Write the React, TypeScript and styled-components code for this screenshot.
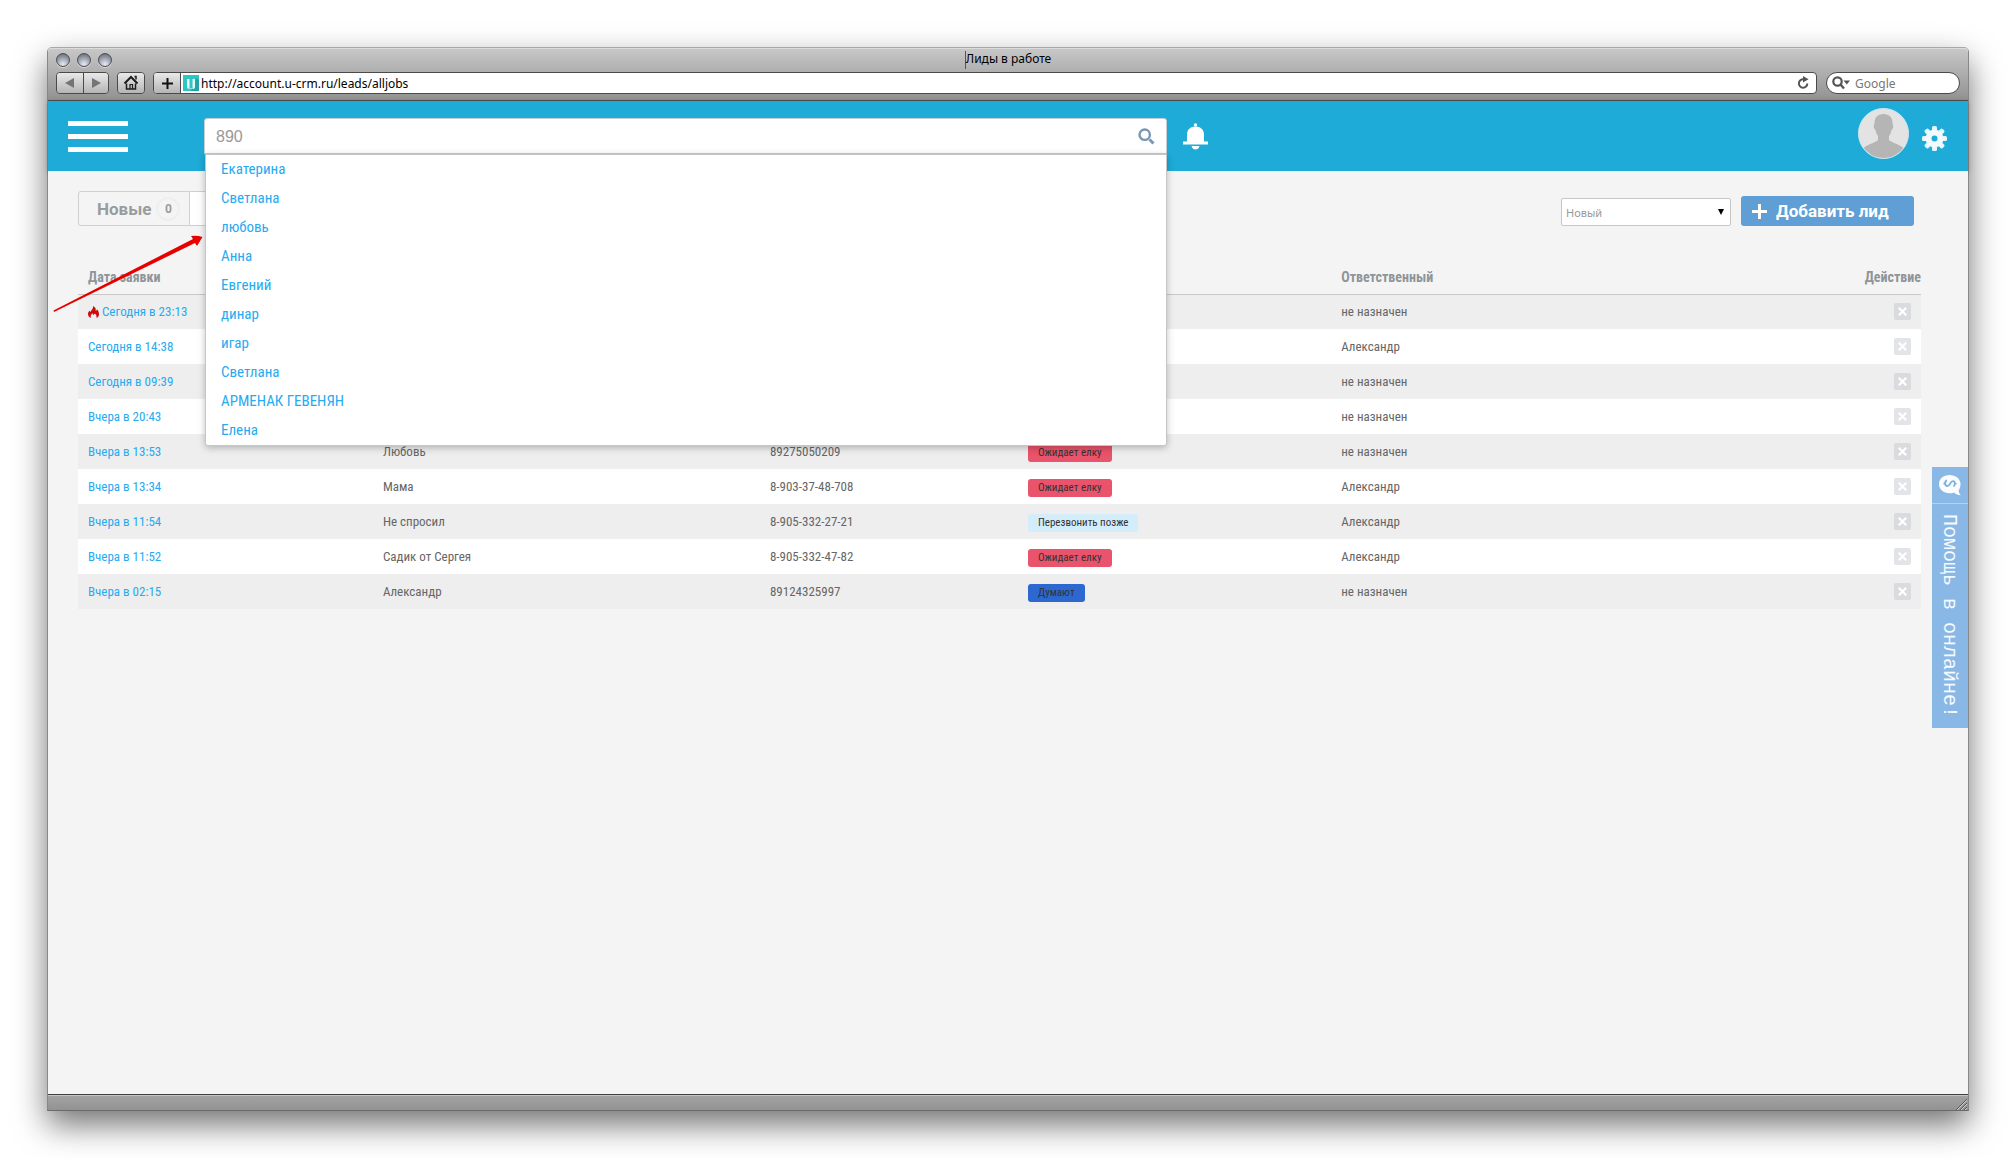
import React, { useState } from 'react';
import styled, { createGlobalStyle } from 'styled-components';

const condensed = `"Roboto Condensed", Roboto, "Noto Sans", sans-serif`;
const sans = `Roboto, "Noto Sans", sans-serif`;
const chromeFont = `"Noto Sans", "Open Sans", sans-serif`;

const GlobalStyle = createGlobalStyle`
  *, *::before, *::after { box-sizing: border-box; }
  body { margin: 0; background: #fff; font-family: ${sans}; }
  button, input, select { font: inherit; margin: 0; }
  button { cursor: pointer; padding: 0; }
  svg { display: block; }
`;

const Desktop = styled.div`
  min-height: 100vh;
  padding: 47px;
  display: flex;
  position: relative;
`;

const Window = styled.div`
  flex: 1;
  min-width: 0;
  display: flex;
  flex-direction: column;
  border: 1px solid #878787;
  border-top-color: #a8a8a8;
  border-bottom-color: #6b6b6b;
  border-radius: 5px 5px 0 0;
  box-shadow: 0 14px 32px rgba(0, 0, 0, 0.55);
`;

const Chrome = styled.div`
  height: 53px;
  border-radius: 4px 4px 0 0;
  border-bottom: 1px solid #4f4f4f;
  background: linear-gradient(#c8c8c8, #929292);
  box-shadow: inset 0 1px 0 #dcdcdc;
`;

const TitleBar = styled.div`
  display: grid;
  grid-template-columns: 1fr auto 1fr;
  align-items: center;
  height: 24px;
  padding: 0 8px;
`;

const Lights = styled.div`
  display: flex;
  gap: 7px;
`;

const Light = styled.button`
  width: 14px;
  height: 14px;
  border: 1px solid #4d5058;
  border-radius: 50%;
  background: radial-gradient(circle at 50% 85%, #e8ebf2 0, #a6acb8 45%, #5b606b 100%);
  box-shadow: 0 1px 0 #d8d8d8;
`;

const Title = styled.div`
  padding-bottom: 2px;
  border-left: 1px solid #555;
  font-family: ${chromeFont};
  font-size: 12px;
  line-height: 16px;
  color: #000;
`;

const NavBar = styled.div`
  display: flex;
  height: 22px;
  padding: 0 8px;
`;

const NavGroup = styled.div`
  display: flex;
  margin-right: 8px;
  border: 1px solid #4a4a4a;
  border-radius: 4px;
  overflow: hidden;
`;

const NavButton = styled.button`
  width: 26px;
  display: grid;
  place-items: center;
  border: 0;
  background: linear-gradient(#e9e9e9, #b5b5b5);
  & + & { width: 25px; border-left: 1px solid #4a4a4a; }
`;

const Address = styled.form`
  flex: 1;
  display: flex;
  align-items: center;
  border: 1px solid #4a4a4a;
  border-radius: 4px;
  background: #fff;
  overflow: hidden;
`;

const PlusButton = styled(NavButton)`
  width: 27px;
  height: 20px;
  margin-right: 2px;
  border-right: 1px solid #4a4a4a;
`;

const ChromeInput = styled.input<{ $muted?: boolean }>`
  flex: 1;
  min-width: 0;
  height: 20px;
  padding: 0 2px;
  border: 0;
  outline: 0;
  background: transparent;
  font-family: ${chromeFont};
  font-size: 12px;
  color: ${(p) => (p.$muted ? '#777' : '#000')};
  &::placeholder { color: #777; opacity: 1; }
`;

const ReloadButton = styled.button`
  margin-right: 6px;
  border: 0;
  background: none;
`;

const WebSearch = styled.label`
  width: 134px;
  margin-left: 9px;
  padding: 0 5px;
  display: flex;
  align-items: center;
  gap: 3px;
  border: 1px solid #4a4a4a;
  border-radius: 11px;
  background: #fff;
`;

const Header = styled.header`
  height: 70px;
  padding: 0 21px 0 20px;
  display: flex;
  align-items: center;
  background: #1eabd8;
  box-shadow: 0 1px 5px rgba(0, 0, 0, 0.25);
`;

const MenuButton = styled.button`
  width: 60px;
  margin-right: 76px;
  display: flex;
  flex-direction: column;
  gap: 8px;
  border: 0;
  background: none;
`;

const MenuLine = styled.span`
  display: block;
  width: 100%;
  height: 5px;
  background: #fff;
`;

const SearchArea = styled.div`
  position: relative;
  width: 963px;
  max-width: 52%;
`;

const SearchBox = styled.form`
  height: 36px;
  padding: 0 11px;
  display: flex;
  align-items: center;
  border: 1px solid #c4cdd0;
  border-radius: 3px 3px 0 0;
  background: #fff;
`;

const SearchInput = styled.input`
  flex: 1;
  min-width: 0;
  padding: 2px 0 0;
  border: 0;
  outline: 0;
  font-family: "Liberation Sans", Arial, sans-serif;
  font-size: 16px;
  color: #999;
`;

const IconButton = styled.button`
  border: 0;
  background: none;
  color: inherit;
`;

const Suggestions = styled.ul`
  position: absolute;
  z-index: 2;
  top: 100%;
  left: 1px;
  right: 0;
  margin: 0;
  padding: 0;
  list-style: none;
  border: 1px solid #c6c6c6;
  border-radius: 0 0 3px 3px;
  background: #fff;
  box-shadow: 0 2px 7px rgba(0, 0, 0, 0.25);
`;

const Suggestion = styled.a`
  display: block;
  padding: 0 15px;
  font-family: ${condensed};
  font-size: 15px;
  line-height: 29px;
  color: #27aaf0;
  text-decoration: none;
`;

const BellButton = styled(IconButton)`
  margin: 0 auto 0 16px;
`;

const SettingsButton = styled(IconButton)`
  margin-top: 4px;
`;

const Avatar = styled.button`
  width: 51px;
  height: 51px;
  margin: 0 13px 6px 0;
  border: 1px solid #d6e6ec;
  border-radius: 50%;
  background: #e3e3e3;
  overflow: hidden;
`;

const Page = styled.main`
  flex: 1;
  display: flex;
  align-items: flex-start;
  background: #f4f4f4;
`;

const Content = styled.section`
  flex: 1;
  min-width: 0;
  padding: 20px 11px 20px 30px;
`;

const Tools = styled.div`
  display: flex;
  justify-content: space-between;
  align-items: flex-end;
  margin: 0 7px 34px 0;
`;

const Tabs = styled.div`
  display: flex;
`;

const Tab = styled.button<{ $active?: boolean }>`
  height: 35px;
  padding: 0 9px 0 18px;
  display: flex;
  align-items: center;
  gap: 5px;
  border: 1px solid #cfcfcf;
  border-left-width: ${(p) => (p.$active ? 0 : 1)}px;
  border-radius: ${(p) => (p.$active ? '0 3px 3px 0' : '3px 0 0 3px')};
  background: ${(p) => (p.$active ? '#fff' : '#f4f4f4')};
  font-weight: 700;
  font-size: 17px;
  color: #999c9e;
`;

const Count = styled.span`
  width: 24px;
  height: 24px;
  border: 2px solid #eee;
  border-radius: 50%;
  font-size: 12px;
  line-height: 20px;
  text-align: center;
`;

const Actions = styled.div`
  display: flex;
  align-items: flex-end;
  gap: 10px;
`;

const SelectBox = styled.label`
  display: grid;
  align-items: center;
  width: 170px;
  & > * { grid-area: 1 / 1; }
  & > svg { justify-self: end; margin-right: 7px; pointer-events: none; }
`;

const Select = styled.select`
  width: 100%;
  height: 28px;
  padding: 0 4px;
  appearance: none;
  border: 1px solid #c6c6c6;
  border-radius: 2px;
  background: #fff;
  font-family: "Noto Sans", sans-serif;
  font-size: 11px;
  color: #999;
`;

const AddButton = styled.button`
  height: 30px;
  width: 173px;
  padding: 0 11px;
  display: flex;
  align-items: center;
  gap: 9px;
  border: 0;
  border-radius: 3px;
  background: #5f9fd5;
  font-size: 17px;
  font-weight: 700;
  color: #fff;
  white-space: nowrap;
`;

const Table = styled.table`
  width: 100%;
  table-layout: fixed;
  border-collapse: collapse;
`;

const HeadCell = styled.th<{ $width?: string; $right?: boolean }>`
  width: ${(p) => p.$width || 'auto'};
  height: 34px;
  padding: 0 ${(p) => (p.$right ? 0 : 10)}px 0 10px;
  border-bottom: 1px solid #c8c8c8;
  text-align: ${(p) => (p.$right ? 'right' : 'left')};
  font-family: ${condensed};
  font-size: 14px;
  font-weight: 700;
  color: #8f9599;
`;

const Row = styled.tr`
  background: #fff;
  &:nth-child(odd) { background: #eee; }
`;

const Cell = styled.td`
  height: 35px;
  padding: 0 10px;
  font-family: ${condensed};
  font-size: 13px;
  color: #666;
`;

const DateLink = styled.a`
  display: flex;
  align-items: center;
  gap: 3px;
  color: #27aaf0;
  text-decoration: none;
`;

const Pill = styled.span<{ $tone: Tone }>`
  display: block;
  width: fit-content;
  height: 18px;
  margin-top: 3px;
  padding: 0 10px;
  border-radius: 3px;
  font-size: 11px;
  line-height: 18px;
  color: #333;
  background: ${(p) => tones[p.$tone]};
`;

const DeleteButton = styled.button`
  width: 17px;
  height: 17px;
  margin-left: auto;
  display: grid;
  place-items: center;
  border: 0;
  border-radius: 2px;
  background: rgba(190, 195, 203, 0.45);
`;

const Help = styled.button`
  width: 36px;
  margin-top: 296px;
  display: flex;
  flex-direction: column;
  align-items: center;
  border: 0;
  background: #8ab8e6;
  color: #f7f9fc;
`;

const HelpIcon = styled.span`
  width: 100%;
  height: 37px;
  display: grid;
  place-items: center;
  border-bottom: 1px solid #b3d2f0;
`;

const HelpText = styled.span`
  padding: 10px 2px 10px 0;
  writing-mode: vertical-rl;
  font-family: "Liberation Mono", monospace;
  font-size: 20px;
  line-height: 34px;
`;

const StatusBar = styled.footer`
  height: 16px;
  padding: 0 1px;
  display: flex;
  justify-content: flex-end;
  align-items: flex-end;
  border-top: 1px solid #404040;
  background: linear-gradient(#a4a4a4, #929292);
  box-shadow: inset 0 1px 0 #c4c4c4;
`;

const Pointer = styled.svg`
  position: absolute;
  z-index: 3;
  left: 53px;
  top: 234px;
  pointer-events: none;
`;

type Tone = 'red' | 'sky' | 'blue';
const tones: Record<Tone, string> = { red: '#e9536b', sky: '#d4edfb', blue: '#2d68d0' };

type Lead = { date: string; hot?: boolean; name: string; phone: string; status: string; tone: Tone; owner: string };
const none = 'не назначен';
const leads: Lead[] = [
  { date: 'Сегодня в 23:13', hot: true, name: '', phone: '', status: '', tone: 'red', owner: none },
  { date: 'Сегодня в 14:38', name: '', phone: '', status: '', tone: 'red', owner: 'Александр' },
  { date: 'Сегодня в 09:39', name: '', phone: '', status: '', tone: 'red', owner: none },
  { date: 'Вчера в 20:43', name: '', phone: '', status: '', tone: 'red', owner: none },
  { date: 'Вчера в 13:53', name: 'Любовь', phone: '89275050209', status: 'Ожидает елку', tone: 'red', owner: none },
  { date: 'Вчера в 13:34', name: 'Мама', phone: '8-903-37-48-708', status: 'Ожидает елку', tone: 'red', owner: 'Александр' },
  { date: 'Вчера в 11:54', name: 'Не спросил', phone: '8-905-332-27-21', status: 'Перезвонить позже', tone: 'sky', owner: 'Александр' },
  { date: 'Вчера в 11:52', name: 'Садик от Сергея', phone: '8-905-332-47-82', status: 'Ожидает елку', tone: 'red', owner: 'Александр' },
  { date: 'Вчера в 02:15', name: 'Александр', phone: '89124325997', status: 'Думают', tone: 'blue', owner: none },
];

const names = ['Екатерина', 'Светлана', 'любовь', 'Анна', 'Евгений', 'динар', 'игар', 'Светлана', 'АРМЕНАК ГЕВЕНЯН', 'Елена'];

const Triangle = ({ left }: { left?: boolean }) => (
  <svg width="10" height="10" viewBox="0 0 10 10">
    <path d={left ? 'M9 0v10L0 5z' : 'M1 0v10l9-5z'} fill="#757575" />
  </svg>
);

const HomeIcon = () => (
  <svg width="16" height="16" viewBox="0 0 16 16" fill="none" stroke="#1c1c1c">
    <path d="M1.500 8.500L8 2l6.500 6.500" strokeWidth="2" />
    <path d="M11.500 1.500h1.500v3" strokeWidth="1.500" />
    <path d="M3.500 8.500v5.500h9V8.500" strokeWidth="1.500" />
    <path d="M7 14v-4.500h2.500V14" strokeWidth="1.200" />
  </svg>
);

const Favicon = () => (
  <svg width="16" height="16" viewBox="0 0 16 16">
    <rect width="16" height="16" fill="#2fc5c3" />
    <path d="M8 16h8V5l-3-2z" fill="#22a5a6" />
    <path d="M4 4h2.500v10H6Q4 13.500 4 11.500z M9.500 4H12v7.500q0 2-1.500 2.500h-1z" fill="#e6faf8" />
    <path d="M6.500 13h3v1h-3z" fill="#8edcda" />
  </svg>
);

const ReloadIcon = () => (
  <svg width="13" height="14" viewBox="0 0 13 14">
    <path d="M10.300 7.500a4.200 4.200 0 1 1-3.800-4.200" fill="none" stroke="#555" strokeWidth="2" />
    <path d="M6 0l5.500 3.200L6 6.500z" fill="#555" />
  </svg>
);

const LoupeIcon = () => (
  <svg width="18" height="14" viewBox="0 0 18 14">
    <circle cx="5.500" cy="5.500" r="4.200" fill="none" stroke="#555" strokeWidth="2.200" />
    <path d="M8.500 8.500l3.500 4" stroke="#555" strokeWidth="2.400" />
    <path d="M11.500 4.500H18l-3.200 4z" fill="#555" />
  </svg>
);

const SearchIcon = () => (
  <svg width="17" height="17" viewBox="0 0 17 17" fill="none" stroke="#7a96b1">
    <circle cx="6.700" cy="6.700" r="5.200" strokeWidth="2.400" />
    <path d="M11.500 11.500l4 4" strokeWidth="3" />
  </svg>
);

const BellIcon = () => (
  <svg width="25" height="27" viewBox="0 0 25 27" fill="#fff">
    <circle cx="12.500" cy="2" r="1.700" />
    <path d="M4 18.500V11.500C4 6.500 7.500 3.500 12.500 3.500S21 6.500 21 11.500v7h4V21.500H0v-3z" />
    <path d="M8.500 23h8q-1 3.500-4 3.500T8.500 23z" />
  </svg>
);

const Person = () => (
  <svg width="49" height="49" viewBox="0 0 49 49" fill="#b5b5b5">
    <path d="M24.500 5c-6 0-9 3.500-9 9 0 1-1 2-.7 4 .3 2 1.200 2.500 1.700 3 .4 2.500 1.200 4.500 2.500 6v4c-1 2-11 4.500-15 8.500C9 46 16 49 24.500 49S40 46 45 39.500c-4-4-14-6.500-15-8.500v-4c1.300-1.500 2.100-3.500 2.500-6 .5-.5 1.400-1 1.700-3 .3-2-.7-3-.7-4 0-5.500-3-9-9-9z" />
  </svg>
);

const teeth = [0, 45, 90, 135, 180, 225, 270, 315];
const GearIcon = () => (
  <svg width="25" height="25" viewBox="0 0 25 25">
    <g fill="#e9f6fb">
      {teeth.map((a) => (
        <rect key={a} x="10" y="0" width="5" height="7" rx="1.500" transform={`rotate(${a} 12.500 12.500)`} />
      ))}
    </g>
    <circle cx="12.500" cy="12.500" r="6" fill="none" stroke="#f3fafd" strokeWidth="6" />
  </svg>
);

const Flame = () => (
  <svg width="11" height="12" viewBox="0 0 11 12">
    <path d="M5 0c3 1.500 3 3 2.500 4.500C8.500 4.500 9 4 9 3.200 10.500 5 11 6.500 11 8c0 2-1 3.500-2.500 4C9 10 8 8.500 6.800 7.500 6.500 8.500 6 9 5 8.500 4.500 8.200 4.500 7.800 4.500 7 3 8.500 2.200 10 3 12 1 11.300 0 9.800 0 8c0-1.500.8-2.800 1.800-3.500 0 .8.200 1.200.7 1.500C2.800 4.500 5.500 3 5 0z" fill="#cc0c0c" />
  </svg>
);

const Cross = () => (
  <svg width="9" height="9" viewBox="0 0 9 9">
    <path d="M.8.8l7.400 7.400M8.200.8L.8 8.200" stroke="#fff" strokeWidth="2.200" />
  </svg>
);

const ChatIcon = () => (
  <svg width="22" height="21" viewBox="0 0 22 21">
    <path d="M10.500 0C4.500 0 0 3.800 0 9s4.500 9.200 10.500 9.200c1.500 0 3-.2 4.500-.8 2 1.800 4 2.600 7 2.800-2-1.800-2.500-3.400-2.200-5.200C21 13.300 21.500 11.300 21.500 9c0-5.200-5-9-11-9z" fill="#fafcfe" />
    <path d="M8 5.500C5.500 6 5.500 10.500 8 11c3 .6 3-5 6-4.800 2.500.3 2.500 4.500.2 5M4.500 8.500h2M15.500 8.700h2" fill="none" stroke="#7fb0de" strokeWidth="1.800" />
  </svg>
);

export default function App() {
  const [query, setQuery] = useState('890');
  const [url, setUrl] = useState('http://account.u-crm.ru/leads/alljobs');
  const stop = (e: React.FormEvent) => e.preventDefault();

  return (
    <Desktop>
      <GlobalStyle />
      <Window>
        <Chrome>
          <TitleBar>
            <Lights>
              <Light aria-label="Закрыть" />
              <Light aria-label="Свернуть" />
              <Light aria-label="Развернуть" />
            </Lights>
            <Title>Лиды в работе</Title>
          </TitleBar>
          <NavBar>
            <NavGroup>
              <NavButton aria-label="Назад"><Triangle left /></NavButton>
              <NavButton aria-label="Вперёд"><Triangle /></NavButton>
            </NavGroup>
            <NavGroup>
              <NavButton aria-label="Домой"><HomeIcon /></NavButton>
            </NavGroup>
            <Address onSubmit={stop}>
              <PlusButton type="button" aria-label="Добавить закладку">
                <svg width="11" height="11" viewBox="0 0 11 11">
                  <path d="M5.500 0v11M0 5.500h11" stroke="#111" strokeWidth="2" />
                </svg>
              </PlusButton>
              <Favicon />
              <ChromeInput aria-label="Адрес" value={url} onChange={(e) => setUrl(e.target.value)} />
              <ReloadButton type="button" aria-label="Обновить"><ReloadIcon /></ReloadButton>
            </Address>
            <WebSearch>
              <LoupeIcon />
              <ChromeInput $muted aria-label="Google" placeholder="Google" />
            </WebSearch>
          </NavBar>
        </Chrome>

        <Header>
          <MenuButton aria-label="Меню">
            <MenuLine />
            <MenuLine />
            <MenuLine />
          </MenuButton>
          <SearchArea>
            <SearchBox onSubmit={stop}>
              <SearchInput aria-label="Поиск" value={query} onChange={(e) => setQuery(e.target.value)} />
              <IconButton aria-label="Найти"><SearchIcon /></IconButton>
            </SearchBox>
            <Suggestions>
              {names.map((n, i) => (
                <li key={i}><Suggestion href="#">{n}</Suggestion></li>
              ))}
            </Suggestions>
          </SearchArea>
          <BellButton aria-label="Уведомления"><BellIcon /></BellButton>
          <Avatar aria-label="Профиль"><Person /></Avatar>
          <SettingsButton aria-label="Настройки"><GearIcon /></SettingsButton>
        </Header>

        <Page>
          <Content>
            <Tools>
              <Tabs>
                <Tab>Новые <Count>0</Count></Tab>
                <Tab $active aria-label="В работе" />
              </Tabs>
              <Actions>
                <SelectBox>
                  <Select aria-label="Статус" defaultValue="new">
                    <option value="new">Новый</option>
                  </Select>
                  <svg width="6" height="6" viewBox="0 0 6 6"><path d="M0 0h6L3 6z" fill="#000" /></svg>
                </SelectBox>
                <AddButton>
                  <svg width="15" height="15" viewBox="0 0 15 15">
                    <path d="M7.500 0v15M0 7.500h15" stroke="#fff" strokeWidth="3" />
                  </svg>
                  Добавить лид
                </AddButton>
              </Actions>
            </Tools>

            <Table>
              <thead>
                <tr>
                  <HeadCell $width="16%">Дата заявки</HeadCell>
                  <HeadCell $width="21%" />
                  <HeadCell $width="14%" />
                  <HeadCell $width="17%" />
                  <HeadCell>Ответственный</HeadCell>
                  <HeadCell $right>Действие</HeadCell>
                </tr>
              </thead>
              <tbody>
                {leads.map((l) => (
                  <Row key={l.date}>
                    <Cell><DateLink href="#">{l.hot && <Flame />}{l.date}</DateLink></Cell>
                    <Cell>{l.name}</Cell>
                    <Cell>{l.phone}</Cell>
                    <Cell>{l.status && <Pill $tone={l.tone}>{l.status}</Pill>}</Cell>
                    <Cell>{l.owner}</Cell>
                    <Cell><DeleteButton aria-label="Удалить"><Cross /></DeleteButton></Cell>
                  </Row>
                ))}
              </tbody>
            </Table>
          </Content>
          <Help>
            <HelpIcon><ChatIcon /></HelpIcon>
            <HelpText>Помощь в онлайне!</HelpText>
          </Help>
        </Page>

        <StatusBar>
          <svg width="11" height="11" viewBox="0 0 11 11" fill="none">
            <path d="M1 11L11 1M5 11l6-6M9 11l2-2" stroke="#ccc" />
            <path d="M0 11L11 0M4 11l7-7M8 11l3-3" stroke="#555" />
          </svg>
        </StatusBar>
      </Window>
      <Pointer width="150" height="80" viewBox="0 0 150 80">
        <path d="M0.500 76.500L140 5l-2-3q6-1 11.500 1L144 12l-2-3L1 78z" fill="#e60000" />
      </Pointer>
    </Desktop>
  );
}
